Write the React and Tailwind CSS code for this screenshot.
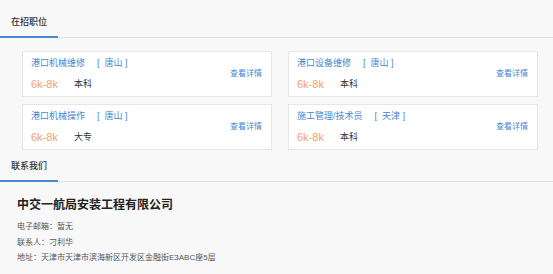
export default function App() {
  const jobs = [
    { title: "港口机械维修", city: "唐山", edu: "本科" },
    { title: "港口设备维修", city: "唐山", edu: "本科" },
    { title: "港口机械操作", city: "唐山", edu: "大专" },
    { title: "施工管理/技术员", city: "天津", edu: "本科" },
  ];
  const font = { fontFamily: '"Liberation Sans", "Noto Sans CJK SC", sans-serif' };
  return (
    <div className="w-[553px] h-[274px] bg-[#f8f8f8] overflow-hidden" style={font}>
      <div className="h-[38px] flex items-end border-b border-[#e3e3e3]">
        <div className="w-[58px] pl-[11px] pb-[8px] -mb-px border-b-2 border-[#4a86d0] text-[9px] leading-[11px] text-[#333] font-medium">
          在招职位
        </div>
      </div>
      <div className="pl-[22px] pr-[15px] pt-[13px] grid grid-cols-2 gap-x-[16px] gap-y-[7px]">
        {jobs.map((j, i) => (
          <div key={i} className="h-[46px] bg-white border border-[#e6e6e6] flex items-center justify-between pl-[8px] pr-[9px]">
            <div className="flex flex-col">
              <div className="flex items-center text-[9px] leading-[11px] text-[#4a86d0]">
                <span>{j.title}</span>
                <span className="ml-[12px]">[&nbsp;&nbsp;{j.city}&nbsp;]</span>
              </div>
              <div className="flex items-center mt-[9px]">
                <span className="text-[11px] leading-[13px] text-[#f3a06a]">6k-8k</span>
                <span className="ml-[16px] text-[9px] leading-[11px] text-[#333]">{j.edu}</span>
              </div>
            </div>
            <span className="text-[8px] leading-[10px] text-[#4a86d0]">查看详情</span>
          </div>
        ))}
      </div>
      <div className="h-[32px] flex items-end border-b border-[#e3e3e3]">
        <div className="w-[58px] pl-[11px] pb-[8px] -mb-px border-b-2 border-[#4a86d0] text-[9px] leading-[11px] text-[#333] font-medium">
          联系我们
        </div>
      </div>
      <div className="pl-[17px] pt-[16px]">
        <div className="text-[12px] leading-[14px] font-bold text-[#222]">中交一航局安装工程有限公司</div>
        <div className="mt-[10px] text-[8px] leading-[10px] text-[#555]">电子邮箱：暂无</div>
        <div className="mt-[6px] text-[8px] leading-[10px] text-[#555]">联系人：刁利华</div>
        <div className="mt-[5px] text-[8px] leading-[10px] text-[#555]">地址：天津市天津市滨海新区开发区金融街E3ABC座5层</div>
      </div>
    </div>
  );
}
